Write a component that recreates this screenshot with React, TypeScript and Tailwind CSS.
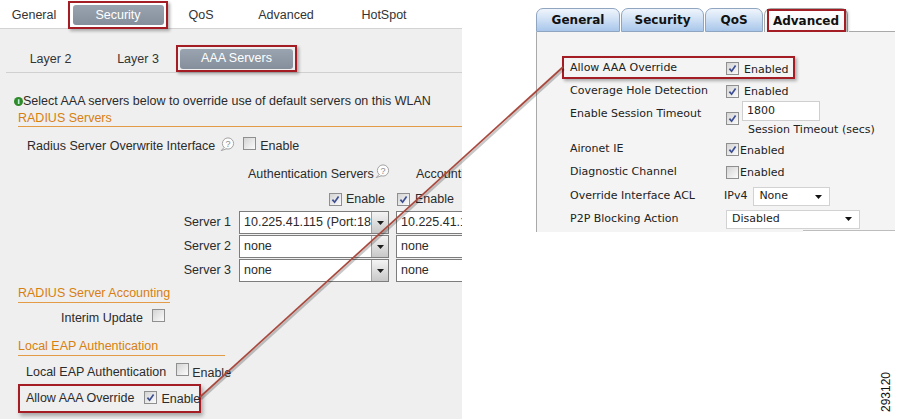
import React from "react";

function Check({ checked }: { checked?: boolean }) {
  return (
    <span className="inline-flex w-[13px] h-[13px] shrink-0 border border-[#8f8f8f] bg-gradient-to-br from-[#d4d4d4] to-[#fbfbfb] items-center justify-center">
      {checked && (
        <svg width="9" height="9" viewBox="0 0 9 9">
          <path d="M1.4 4.6 L3.6 7.2 L7.6 1.4" fill="none" stroke="#3d4f92" strokeWidth="1.7" />
        </svg>
      )}
    </span>
  );
}

function Help() {
  return (
    <svg width="16" height="15" viewBox="0 0 16 15" className="shrink-0">
      <circle cx="9" cy="6.5" r="5.6" fill="#fdfdfd" stroke="#a3a3a3" strokeWidth="1" />
      <path d="M5.2 10.4 L2.2 13.6 L7.4 11.8" fill="#fdfdfd" stroke="#a3a3a3" strokeWidth="1" />
      <text x="9" y="10" fontSize="9" textAnchor="middle" fill="#8c8c8c" fontFamily="Liberation Sans, sans-serif">?</text>
    </svg>
  );
}

function LSelect({ value }: { value: string }) {
  return (
    <div className="flex h-[23px] w-[150px] shrink-0 border border-[#7d7d7d] bg-white">
      <div className="flex-1 overflow-hidden whitespace-nowrap pl-[4px] leading-[21px]">{value}</div>
      <div className="w-[17px] shrink-0 border-l border-[#a0a0a0] bg-gradient-to-b from-[#f4f4f4] to-[#c8c8c8] flex items-center justify-center">
        <svg width="7" height="4" viewBox="0 0 7 4">
          <path d="M0 0 H7 L3.5 4 Z" fill="#1e1e1e" />
        </svg>
      </div>
    </div>
  );
}

function LeftPanel() {
  return (
    <div className="w-[462px] h-[419px] shrink-0 overflow-hidden bg-[#efefef] text-[12.5px] text-[#2b2b2b] flex flex-col [font-family:'Liberation_Sans',Arial,sans-serif]">
      {/* top tabs */}
      <div className="h-[29px] shrink-0 bg-white border-b border-[#d3d3d3] flex items-start pt-[1px] text-[#333]">
        <div className="w-[68px] h-[28px] shrink-0 flex items-center justify-center">General</div>
        <div className="w-[100px] h-[28px] shrink-0 border-2 border-[#a51d24] shadow-[2px_2px_3px_rgba(0,0,0,0.3)] flex items-center justify-center">
          <div className="w-[91px] h-[20px] rounded-[3px] bg-gradient-to-b from-[#9aa4b0] to-[#858f9b] text-white flex items-center justify-center">Security</div>
        </div>
        <div className="w-[66px] h-[28px] shrink-0 flex items-center justify-center">QoS</div>
        <div className="w-[104px] h-[28px] shrink-0 flex items-center justify-center">Advanced</div>
        <div className="w-[92px] h-[28px] shrink-0 flex items-center justify-center">HotSpot</div>
      </div>

      {/* sub tabs */}
      <div className="ml-[6px] h-[44px] shrink-0 border-b border-[#d0d0d0] flex items-end text-[#333]">
        <div className="w-[89px] h-[26px] shrink-0 flex items-center justify-center">Layer 2</div>
        <div className="w-[81px] h-[26px] shrink-0 pl-[5px] flex items-center justify-center">Layer 3</div>
        <div className="w-[121px] h-[27px] shrink-0 border-2 border-[#a51d24] shadow-[2px_2px_3px_rgba(0,0,0,0.3)] flex items-center justify-center">
          <div className="w-[113px] h-[20px] rounded-[3px] bg-gradient-to-b from-[#9aa4b0] to-[#858f9b] text-white flex items-center justify-center">AAA Servers</div>
        </div>
      </div>

      {/* info */}
      <div className="mt-[18px] h-[20px] shrink-0 pl-[14px] flex items-center whitespace-nowrap">
        <span className="w-[9px] h-[9px] shrink-0 rounded-full bg-[#2f8a2a] text-white text-[8px] font-bold leading-[9px] text-center">i</span>
        <span>Select AAA servers below to override use of default servers on this WLAN</span>
      </div>

      {/* RADIUS Servers heading */}
      <div className="ml-[18px] h-[16px] shrink-0 border-b border-[#e39b45] leading-[14px] text-[#d7800f]">RADIUS Servers</div>

      {/* overwrite */}
      <div className="mt-[9px] h-[20px] shrink-0 pl-[27px] flex items-center whitespace-nowrap">
        <span className="shrink-0">Radius Server Overwrite Interface</span>
        <span className="ml-[4px] -mt-[3px] shrink-0"><Help /></span>
        <span className="ml-[8px] shrink-0"><Check /></span>
        <span className="ml-[4px] shrink-0">Enable</span>
      </div>

      {/* auth servers header */}
      <div className="mt-[8px] h-[20px] shrink-0 pl-[248px] flex items-center whitespace-nowrap">
        <div className="w-[168px] shrink-0 flex items-center">
          <span className="shrink-0">Authentication Servers</span>
          <span className="-mt-[6px] shrink-0"><Help /></span>
        </div>
        <span className="shrink-0">Accounting Servers</span>
      </div>

      {/* enable row */}
      <div className="mt-[5px] h-[20px] shrink-0 pl-[329px] flex items-center whitespace-nowrap">
        <div className="w-[68px] shrink-0 flex items-center">
          <Check checked />
          <span className="ml-[4px]">Enable</span>
        </div>
        <Check checked />
        <span className="ml-[5px] shrink-0">Enable</span>
      </div>

      {/* server rows */}
      <div className="mt-[2px] flex flex-col gap-[1px] shrink-0">
        {[
          ["Server 1", "10.225.41.115 (Port:1812)"],
          ["Server 2", "none"],
          ["Server 3", "none"],
        ].map(([l, v]) => (
          <div key={l} className="h-[23px] flex items-center whitespace-nowrap">
            <div className="w-[231px] shrink-0 text-right">{l}</div>
            <div className="ml-[8px] shrink-0"><LSelect value={v} /></div>
            <div className="ml-[7px] shrink-0"><LSelect value={v} /></div>
          </div>
        ))}
      </div>

      {/* RADIUS Server Accounting */}
      <div className="mt-[3px] ml-[18px] h-[18px] shrink-0 flex">
        <span className="border-b border-[#e39b45] text-[#d7800f] leading-[16px]">RADIUS Server Accounting</span>
      </div>

      {/* Interim */}
      <div className="mt-[5px] h-[20px] shrink-0 pl-[61px] flex items-center whitespace-nowrap">
        <span>Interim Update</span>
        <span className="ml-[9px]"><Check /></span>
      </div>

      {/* Local EAP heading */}
      <div className="mt-[11px] ml-[18px] w-[207px] h-[17px] shrink-0 border-b border-[#e39b45] leading-[15px] text-[#d7800f]">Local EAP Authentication</div>

      {/* Local EAP row */}
      <div className="mt-[6px] h-[20px] shrink-0 pl-[26px] flex items-center whitespace-nowrap">
        <span>Local EAP Authentication</span>
        <span className="ml-[10px]"><Check /></span>
        <span className="ml-[3px] mt-[3px]">Enable</span>
      </div>

      {/* Allow AAA override */}
      <div className="mt-[2px] ml-[18px] w-[183px] h-[29px] shrink-0 border-2 border-[#a51d24] shadow-[2px_3px_4px_rgba(0,0,0,0.3)] pl-[6px] flex items-center whitespace-nowrap">
        <span>Allow AAA Override</span>
        <span className="ml-[10px]"><Check checked /></span>
        <span className="ml-[4px] mt-[2px]">Enable</span>
      </div>
    </div>
  );
}

function BTab({ label, w }: { label: string; w: string }) {
  return (
    <div className={`${w} h-[24px] shrink-0 rounded-t-[7px] border border-[#8fa5c0] bg-gradient-to-b from-[#f0f5fc] via-[#cddff4] to-[#a8c6ea] flex items-center justify-center font-bold text-[12px] text-[#111]`}>
      {label}
    </div>
  );
}

function RSelect({ value, w }: { value: string; w: string }) {
  return (
    <div className={`${w} h-[19px] shrink-0 border border-[#d2d2d2] bg-white flex items-center pl-[5px] pr-[7px]`}>
      <span className="flex-1">{value}</span>
      <svg width="7" height="4" viewBox="0 0 7 4">
        <path d="M0 0 H7 L3.5 4 Z" fill="#111" />
      </svg>
    </div>
  );
}

function RightPanel() {
  return (
    <div className="w-[359px] h-[224px] shrink-0 flex flex-col text-[11px] text-[#222] [font-family:'DejaVu_Sans',Verdana,sans-serif]">
      <div className="h-[24px] shrink-0 flex items-end gap-[1px]">
        <BTab label="General" w="w-[84px]" />
        <BTab label="Security" w="w-[83px]" />
        <BTab label="QoS" w="w-[58px]" />
        <div className="w-[84px] h-[24px] shrink-0 rounded-t-[7px] border border-b-0 border-[#a9a9a9] bg-gradient-to-b from-[#ffffff] to-[#f4f4f4] flex items-end justify-center">
          <div className="w-[79px] h-[23px] border-2 border-[#a51d24] shadow-[2px_2px_3px_rgba(0,0,0,0.3)] flex items-center justify-center font-bold text-[12px] text-[#111]">Advanced</div>
        </div>
        <div className="flex-1 h-full border-b border-[#a9a9a9]" />
      </div>
      <div className="flex-1 bg-[#f4f4f4] border-l border-[#a9a9a9] flex flex-col whitespace-nowrap">
        {/* row 1 */}
        <div className="mt-[24px] ml-[25px] w-[233px] h-[23px] shrink-0 border-2 border-[#a51d24] shadow-[2px_2px_3px_rgba(0,0,0,0.3)] pl-[6px] pt-[2px] flex items-center">
          <span className="w-[156px] shrink-0">Allow AAA Override</span>
          <Check checked />
          <span className="ml-[5px] mt-[3px]">Enabled</span>
        </div>
        {/* row 2 */}
        <div className="mt-[1px] h-[21px] shrink-0 pl-[33px] pt-[1px] flex items-center">
          <span className="w-[156px] shrink-0">Coverage Hole Detection</span>
          <Check checked />
          <span className="ml-[5px] mt-[3px]">Enabled</span>
        </div>
        {/* row 3 */}
        <div className="h-[38px] shrink-0 pl-[33px] flex items-start">
          <span className="w-[156px] shrink-0 h-[25px] leading-[25px]">Enable Session Timeout</span>
          <div className="flex flex-col">
            <div className="h-[20px] flex items-start">
              <span className="mt-[11px]"><Check checked /></span>
              <div className="ml-[3px] w-[78px] h-[20px] border border-[#cfcfcf] bg-white pl-[4px] leading-[18px]">1800</div>
            </div>
            <div className="ml-[22px] leading-[17px]">Session Timeout (secs)</div>
          </div>
        </div>
        {/* row 4 */}
        <div className="h-[21px] shrink-0 pl-[33px] flex items-center">
          <span className="w-[156px] shrink-0">Aironet IE</span>
          <Check checked />
          <span className="ml-[1px] mt-[3px]">Enabled</span>
        </div>
        {/* row 5 */}
        <div className="mt-[1px] h-[22px] shrink-0 pl-[33px] flex items-center">
          <span className="w-[156px] shrink-0">Diagnostic Channel</span>
          <Check />
          <span className="ml-[1px] mt-[3px]">Enabled</span>
        </div>
        {/* row 6 */}
        <div className="mt-[2px] h-[23px] shrink-0 pl-[33px] flex items-center">
          <span className="w-[154px] shrink-0">Override Interface ACL</span>
          <span>IPv4</span>
          <span className="ml-[6px]"><RSelect value="None" w="w-[77px]" /></span>
        </div>
        {/* row 7 */}
        <div className="h-[22px] shrink-0 pl-[33px] flex items-center">
          <span className="w-[156px] shrink-0">P2P Blocking Action</span>
          <RSelect value="Disabled" w="w-[134px]" />
        </div>
        <div className="ml-[266px] flex-1 border-t border-[#bdbdbd] bg-white" />
      </div>
    </div>
  );
}

export default function App() {
  return (
    <div className="relative w-[899px] h-[419px] bg-white overflow-hidden flex">
      <LeftPanel />
      <div className="flex-1 flex flex-col pl-[74px] pt-[8px]">
        <RightPanel />
        <div className="flex-1 flex justify-end items-end pr-[6px] pb-[7px]">
          <span className="[writing-mode:vertical-rl] rotate-180 text-[12px] leading-[13px] text-[#111] [font-family:'Liberation_Sans',Arial,sans-serif]">293120</span>
        </div>
      </div>
      <svg className="absolute left-0 top-0 pointer-events-none" width="899" height="419" viewBox="0 0 899 419">
        <line x1="201" y1="399" x2="564" y2="69" stroke="rgba(0,0,0,0.22)" strokeWidth="2.5" />
        <line x1="200" y1="397" x2="563" y2="67" stroke="#a9483c" strokeWidth="1.7" />
      </svg>
    </div>
  );
}
